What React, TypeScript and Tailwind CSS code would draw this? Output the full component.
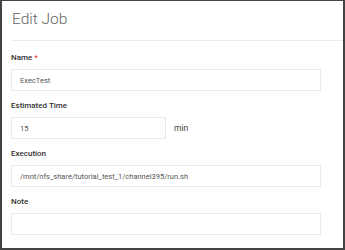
import React from "react";

const font = { fontFamily: "Roboto, 'Liberation Sans', sans-serif" };

function Field({ label, required, value, narrow, suffix }: { label: string; required?: boolean; value?: string; narrow?: boolean; suffix?: string }) {
  return (
    <div className="mb-[8px]">
      <div className="h-[14px] mb-[4px] text-[8px] leading-[14px] font-medium text-[#333]">
        {label}
        {required && <span className="text-[#e53935] ml-[2px]">*</span>}
      </div>
      <div className="flex items-center">
        <input
          readOnly
          value={value ?? ""}
          className={`h-[22px] ${narrow ? "w-[155px]" : "w-[310px]"} border border-[#ebebeb] bg-white px-2 text-[7.5px] text-[#555] outline-none`}
        />
        {suffix && <span className="ml-[8px] text-[8.5px] text-[#444]">{suffix}</span>}
      </div>
    </div>
  );
}

export default function App() {
  return (
    <div style={font} className="w-[345px] h-[250px] bg-white border-[#444] border-l-2 border-r-2 border-b-2 border-t overflow-hidden">
      <div className="pt-[8px] pl-[10px] h-[20px] box-content text-[15.5px] leading-[20px] font-light text-[#666]">Edit Job</div>
      <div className="ml-[9px] mt-[11px] h-px bg-[#ececec]" />
      <div className="pl-[9px] pt-[10px]">
        <Field label="Name" required value="ExecTest" />
        <Field label="Estimated Time" value="15" narrow suffix="min" />
        <Field label="Execution" value="/mnt/nfs_share/tutorial_test_1/channel395/run.sh" />
        <Field label="Note" />
      </div>
    </div>
  );
}
